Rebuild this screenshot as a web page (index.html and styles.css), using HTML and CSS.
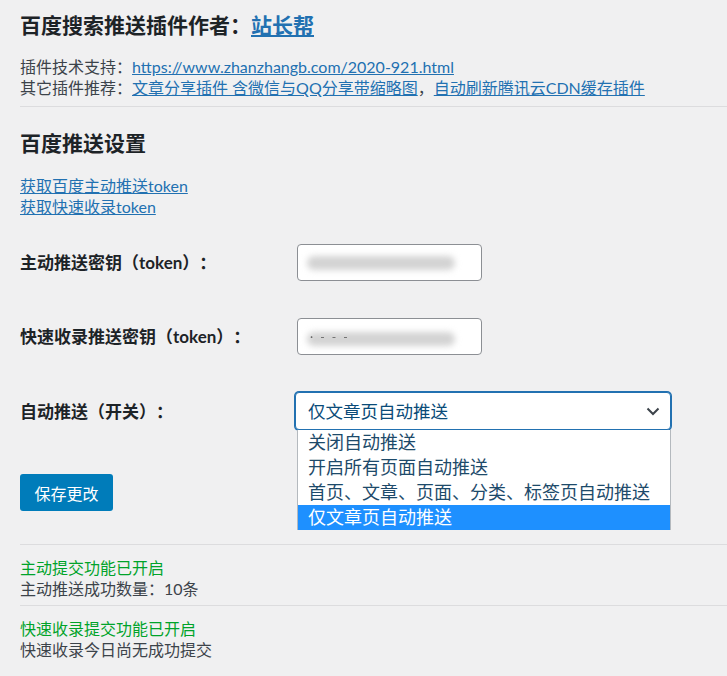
FILE: index.html
```html
<!DOCTYPE html>
<html lang="zh-CN">
<head>
<meta charset="utf-8">
<title>百度搜索推送设置</title>
<link rel="stylesheet" href="styles.css">
</head>
<body>
<div class="wrap">
  <h1 class="title">百度搜索推送插件作者：<a href="#">站长帮</a></h1>
  <div class="meta">
    <div>插件技术支持：<a href="#">https://www.zhanzhangb.com/2020-921.html</a></div>
    <div>其它插件推荐：<a href="#">文章分享插件 含微信与QQ分享带缩略图</a>，<a href="#">自动刷新腾讯云CDN缓存插件</a></div>
  </div>
  <hr class="sep">
  <h2 class="section">百度推送设置</h2>
  <div class="links">
    <div><a href="#">获取百度主动推送token</a></div>
    <div><a href="#">获取快速收录token</a></div>
  </div>
  <div class="form">
    <div class="row">
      <label class="label">主动推送密钥（token）：</label>
      <div class="input"><span class="blur b1"></span></div>
    </div>
    <div class="row">
      <label class="label">快速收录推送密钥（token）：</label>
      <div class="input"><span class="blur b2"></span><span class="dots">· - - - </span></div>
    </div>
    <div class="row row-select">
      <label class="label">自动推送（开关）：</label>
      <div class="select-wrap">
        <div class="select">
          <span>仅文章页自动推送</span>
          <svg class="chev" width="14" height="9" viewBox="0 0 14 9"><path d="M1.5 1.5 L7 7 L12.5 1.5" fill="none" stroke="#3c434a" stroke-width="2"/></svg>
        </div>
        <ul class="dropdown">
          <li>关闭自动推送</li>
          <li>开启所有页面自动推送</li>
          <li>首页、文章、页面、分类、标签页自动推送</li>
          <li class="active">仅文章页自动推送</li>
        </ul>
      </div>
    </div>
  </div>
  <button class="btn">保存更改</button>
  <hr class="sep sep2">
  <div class="status">
    <div class="ok">主动提交功能已开启</div>
    <div>主动推送成功数量：10条</div>
  </div>
  <hr class="sep sep3">
  <div class="status">
    <div class="ok">快速收录提交功能已开启</div>
    <div>快速收录今日尚无成功提交</div>
  </div>
</div>
</body>
</html>
```
FILE: styles.css
```css
html, body {
  margin: 0;
  padding: 0;
  background: #f0f0f1;
}
body {
  font-family: Lato, "Noto Sans CJK SC", sans-serif;
  color: #3c434a;
  font-size: 16px;
  line-height: 21px;
  text-spacing-trim: space-all;
}
a {
  color: #2271b1;
  text-decoration: underline;
}
.wrap {
  padding-left: 20px;
}
.title {
  margin: 0;
  padding-top: 11px;
  font-size: 21px;
  line-height: 27px;
  font-weight: 700;
  color: #1d2327;
}
.title a {
  color: #2271b1;
}
.meta {
  margin-top: 18px;
}
.sep {
  margin: 8px 0 0 0;
  border: 0;
  border-top: 1px solid #dcdcde;
  height: 0;
}
.section {
  margin: 23px 0 0 0;
  font-size: 21px;
  line-height: 26px;
  font-weight: 700;
  color: #1d2327;
}
.links {
  margin-top: 19px;
}
.form {
  margin-top: 27px;
}
.row {
  display: grid;
  grid-template-columns: 277px auto;
  align-items: center;
  height: 37px;
  margin-bottom: 37px;
}
.row-select {
  height: 38px;
  margin-bottom: 0;
}
.label {
  font-weight: 700;
  color: #1d2327;
  font-size: 17px;
}
.input {
  position: relative;
  width: 185px;
  height: 37px;
  box-sizing: border-box;
  background: #fff;
  border: 1px solid #8c8f94;
  border-radius: 4px;
  overflow: hidden;
}
.blur {
  position: absolute;
  left: 9px;
  height: 14px;
  width: 148px;
  background: #d3d3d3;
  border-radius: 7px;
  filter: blur(3px);
}
.b1 { top: 11px; }
.b2 { top: 13px; }
.dots {
  position: absolute;
  left: 12px;
  top: 7px;
  font-size: 12px;
  color: #666;
  letter-spacing: 2px;
  filter: blur(0.6px);
}
.select-wrap {
  position: relative;
  margin-left: -2px;
  width: 376px;
}
.select {
  box-sizing: border-box;
  height: 38px;
  border: 1px solid #2271b1;
  box-shadow: 0 0 0 1px #2271b1;
  border-radius: 4px;
  background: #fff;
  display: flex;
  align-items: center;
  justify-content: space-between;
  padding: 0 10px 0 12px;
  font-size: 17.5px;
  color: #0a4b78;
}
.chev {
  display: block;
}
.dropdown {
  position: absolute;
  left: 2px;
  top: 38px;
  width: 374px;
  margin: 0;
  padding: 0;
  list-style: none;
  background: #fff;
  border-left: 1px solid #b4b9be;
  border-right: 1px solid #b4b9be;
  box-sizing: border-box;
  z-index: 5;
}
.dropdown li {
  height: 25px;
  line-height: 25px;
  padding-left: 10px;
  font-size: 18px;
  color: #1d4a6a;
  white-space: nowrap;
}
.dropdown li.active {
  background: #1e90ff;
  color: #fff;
}
.btn {
  display: block;
  margin-top: 44px;
  width: 93px;
  height: 37px;
  border: 0;
  border-radius: 3px;
  background: #007cba;
  color: #fff;
  font-family: Lato, "Noto Sans CJK SC", sans-serif;
  font-size: 16px;
  padding: 0;
}
.sep2 {
  margin-top: 33px;
}
.sep3 {
  margin-top: 6px;
}
.status {
  margin-top: 12px;
}
.ok {
  color: #00a32a;
}
```
